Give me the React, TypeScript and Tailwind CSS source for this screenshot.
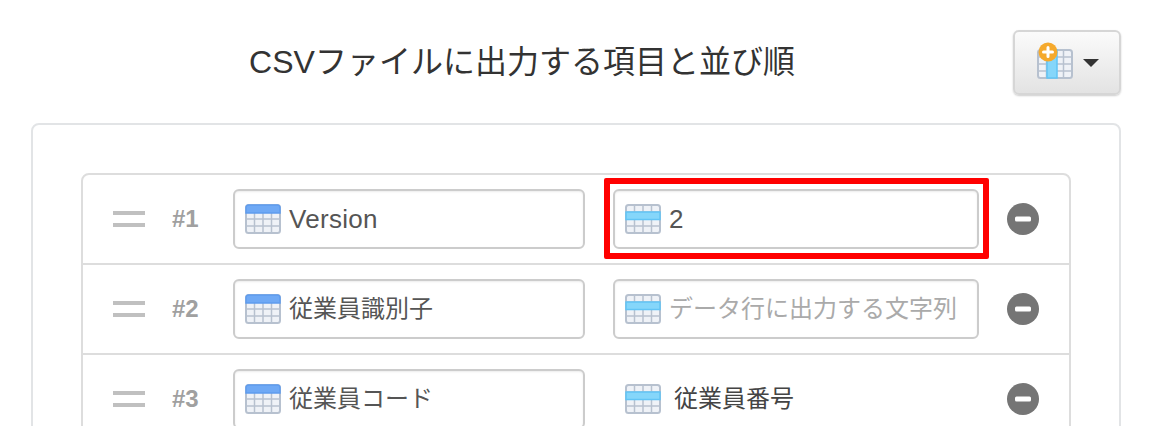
import React from "react";

type Highlight = "header" | "row" | "column";

const TableIcon = ({ highlight }: { highlight: Highlight }) => {
  const xs = [9.5, 18, 26.5];
  const ys = [8, 15, 22];
  return (
    <svg width="36" height="30" viewBox="0 0 36 30" className="shrink-0 block">
      <rect x="1" y="1" width="34" height="28" rx="2.5" fill="#eff2f7" stroke="#b7c1cf" strokeWidth="2" />
      {xs.map((x) => (
        <line key={x} x1={x} y1="1" x2={x} y2="29" stroke="#b7c1cf" strokeWidth="1.5" />
      ))}
      {ys.map((y) => (
        <line key={y} x1="1" y1={y} x2="35" y2={y} stroke="#b7c1cf" strokeWidth="1.5" />
      ))}
      {highlight === "header" && (
        <path d="M1 9V3.5A2.5 2.5 0 0 1 3.5 1h29A2.5 2.5 0 0 1 35 3.5V9Z" fill="#6fa9f5" stroke="#5f9cee" strokeWidth="1.5" />
      )}
      {highlight === "row" && <rect x="1" y="8" width="34" height="7.5" fill="#85d6fa" stroke="#62c4f5" strokeWidth="1.5" />}
      {highlight === "column" && <rect x="10" y="1" width="10" height="28" fill="#85d6fa" stroke="#62c4f5" strokeWidth="1.5" />}
    </svg>
  );
};

const AddColumnIcon = () => (
  <span className="relative block w-[36px] h-[30px] mt-[3px]">
    <TableIcon highlight="column" />
    <svg width="20" height="20" viewBox="0 0 20 20" className="absolute left-[1px] -top-[7px]">
      <circle cx="10" cy="10" r="9.5" fill="#f5a92c" />
      <path d="M10 5.5v9M5.5 10h9" stroke="#fff" strokeWidth="3" strokeLinecap="round" />
    </svg>
  </span>
);

const Field = ({
  width,
  icon,
  text,
  placeholder,
  plain,
  latin,
}: {
  width: string;
  icon: Highlight;
  text: string;
  placeholder?: boolean;
  plain?: boolean;
  latin?: boolean;
}) => (
  <div
    className={`${width} h-[60px] shrink-0 flex items-center pl-[10px] rounded-[6px] border-2 ${
      plain ? "border-transparent" : "border-[#cccccc] bg-white shadow-[inset_0_1px_2px_rgba(0,0,0,0.08)]"
    }`}
  >
    <TableIcon highlight={icon} />
    <span
      className={`${plain ? "ml-[13px] text-[#444444]" : "ml-[8px]"} ${latin ? "text-[26px] tracking-[0.3px]" : "text-[24px]"} ${
        placeholder ? "text-[#aaaaaa]" : plain ? "" : "text-[#555555]"
      } whitespace-nowrap leading-none`}
    >
      {text}
    </span>
  </div>
);

const rows = [
  { no: "#1", left: "Version", latin: true, right: "2", rightLatin: true, rightIcon: "row" as Highlight },
  { no: "#2", left: "従業員識別子", right: "データ行に出力する文字列", placeholder: true },
  { no: "#3", left: "従業員コード", right: "従業員番号", plain: true },
];

export default function App() {
  return (
    <div className="relative h-[426px] overflow-hidden bg-white pl-[31px] pr-[43px] font-['Liberation_Sans','Noto_Sans_CJK_JP',sans-serif]">
      <div className="flex items-start pt-[30px]">
        <h1 className="flex-1 text-center text-[32px] leading-[64px] font-normal text-[#333333]">
          CSVファイルに出力する項目と並び順
        </h1>
        <button className="w-[108px] h-[65px] flex items-center justify-center gap-[10px] pl-[1px] rounded-[6px] border-2 border-[#d6d6d6] bg-gradient-to-b from-[#fbfbfb] to-[#e3e3e3] shadow-[0_1px_2px_rgba(0,0,0,0.2)]">
          <AddColumnIcon />
          <span className="block w-0 h-0 border-x-[8px] border-x-transparent border-t-[8px] border-t-[#333333]" />
        </button>
      </div>

      <div className="mt-[28px] rounded-[8px] border-2 border-[#e2e4e6] pt-[48px] pl-[48px] pr-[48px] pb-[48px]">
        <div className="rounded-[8px] border-2 border-[#dddddd]">
          {rows.map((r) => (
            <div key={r.no} className="h-[90px] flex items-center border-b-2 border-[#dddddd]">
              <div className="ml-[30px] w-[32px] shrink-0 flex flex-col gap-[8px]">
                <span className="block h-[4px] bg-[#c0c0c0]" />
                <span className="block h-[4px] bg-[#c0c0c0]" />
              </div>
              <span className="ml-[27px] w-[61px] shrink-0 text-[24px] leading-none font-bold text-[#a0a0a0]">{r.no}</span>
              <Field width="w-[352px]" icon="header" text={r.left} latin={r.latin} />
              <div className="ml-[28px]">
                <Field
                  width="w-[366px]"
                  icon={r.rightIcon ?? "row"}
                  text={r.right}
                  latin={r.rightLatin}
                  placeholder={r.placeholder}
                  plain={r.plain}
                />
              </div>
              <svg width="32" height="32" viewBox="0 0 32 32" className="ml-[28px] shrink-0">
                <circle cx="16" cy="16" r="16" fill="#757575" />
                <rect x="8" y="13.5" width="16" height="5" rx="1.5" fill="#fff" />
              </svg>
            </div>
          ))}
        </div>
      </div>

      <div className="absolute left-[604px] top-[178px] w-[385px] h-[81px] rounded-[2px] border-[6px] border-[#ff0000]" />
    </div>
  );
}
